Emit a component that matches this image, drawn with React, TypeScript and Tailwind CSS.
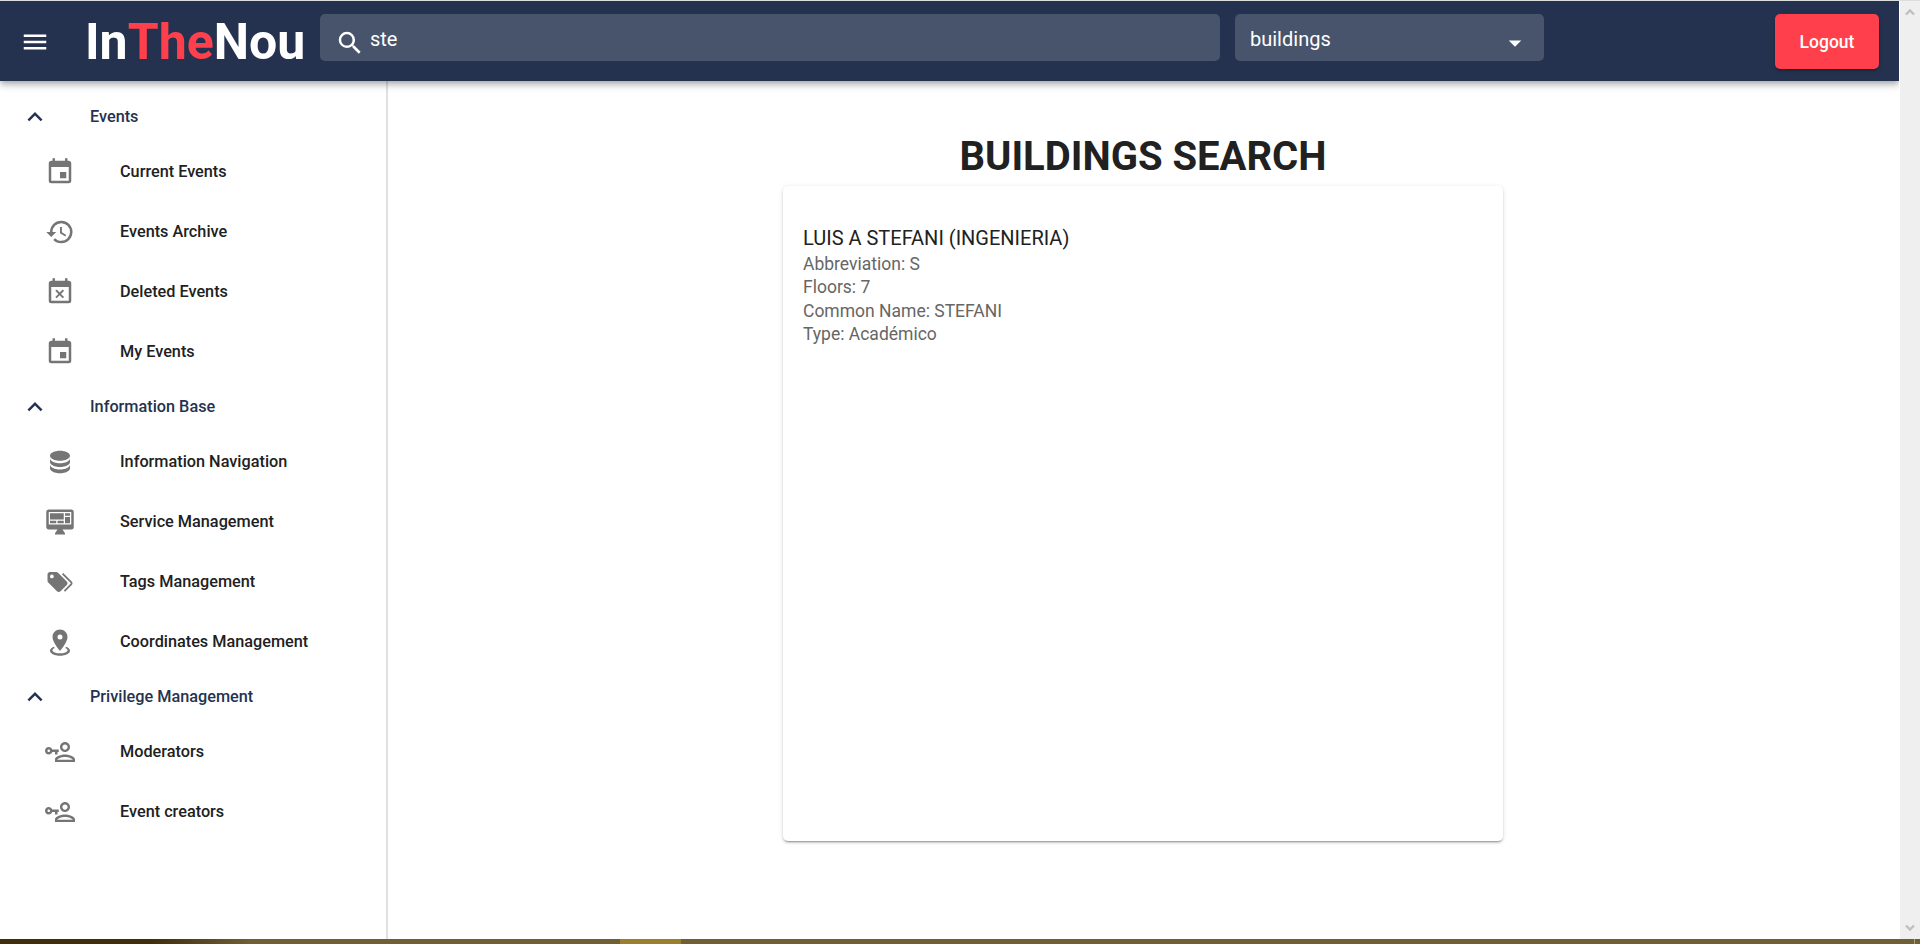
const paths = {
  menu: 'M3,6H21V8H3V6M3,11H21V13H3V11M3,16H21V18H3V16Z',
  calendar:
    'M19,19H5V8H19M16,1V3H8V1H6V3H5C3.89,3 3,3.89 3,5V19A2,2 0 0,0 5,21H19A2,2 0 0,0 21,19V5C21,3.89 20.1,3 19,3H18V1M17,12H12V17H17V12Z',
  history:
    'M13.5,8H12V13L16.28,15.54L17,14.33L13.5,12.25V8M13,3A9,9 0 0,0 4,12H1L4.96,16.03L9,12H6A7,7 0 0,1 13,5A7,7 0 0,1 20,12A7,7 0 0,1 13,19C11.07,19 9.32,18.21 8.06,16.94L6.64,18.36C8.27,20 10.5,21 13,21A9,9 0 0,0 22,12A9,9 0 0,0 13,3',
  calendarRemove:
    'M19,19H5V8H19M19,3H18V1H16V3H8V1H6V3H5C3.89,3 3,3.9 3,5V19A2,2 0 0,0 5,21H19A2,2 0 0,0 21,19V5A2,2 0 0,0 19,3M9.31,17L11.75,14.56L14.19,17L15.25,15.94L12.81,13.5L15.25,11.06L14.19,10L11.75,12.44L9.31,10L8.25,11.06L10.69,13.5L8.25,15.94L9.31,17Z',
  database:
    'M12,3C7.58,3 4,4.79 4,7C4,9.21 7.58,11 12,11C16.42,11 20,9.21 20,7C20,4.79 16.42,3 12,3M4,9V12C4,14.21 7.58,16 12,16C16.42,16 20,14.21 20,12V9C20,11.21 16.42,13 12,13C7.58,13 4,11.21 4,9M4,14V17C4,19.21 7.58,21 12,21C16.42,21 20,19.21 20,17V14C20,16.21 16.42,18 12,18C7.58,18 4,16.21 4,14Z',
  dashboard:
    'M21,14V4H3V14H21M21,2A2,2 0 0,1 23,4V16A2,2 0 0,1 21,18H14L16,21V22H8V21L10,18H3C1.89,18 1,17.1 1,16V4C1,2.89 1.89,2 3,2H21M4,5H15V10H4V5M16,5H20V7H16V5M20,8V13H16V8H20M4,11H9V13H4V11M10,11H15V13H10V11Z',
  tags:
    'M5.5,9A1.5,1.5 0 0,0 7,7.5A1.5,1.5 0 0,0 5.5,6A1.5,1.5 0 0,0 4,7.5A1.5,1.5 0 0,0 5.5,9M17.41,11.58C17.77,11.94 18,12.44 18,13C18,13.55 17.78,14.05 17.41,14.41L12.41,19.41C12.05,19.77 11.55,20 11,20C10.45,20 9.95,19.78 9.58,19.41L2.59,12.42C2.22,12.05 2,11.55 2,11V6C2,4.89 2.89,4 4,4H9C9.55,4 10.05,4.22 10.41,4.58L17.41,11.58M13.54,5.71L14.54,4.71L21.41,11.58C21.78,11.94 22,12.45 22,13C22,13.55 21.78,14.05 21.42,14.41L16.04,19.79L15.04,18.79L20.75,13L13.54,5.71Z',
  marker:
    'M12,2C15.31,2 18,4.66 18,7.95C18,12.41 12,19 12,19C12,19 6,12.41 6,7.95C6,4.66 8.69,2 12,2M12,6A2,2 0 0,0 10,8A2,2 0 0,0 12,10A2,2 0 0,0 14,8A2,2 0 0,0 12,6M20,19C20,21.21 16.42,23 12,23C7.58,23 4,21.21 4,19C4,17.71 5.22,16.56 7.11,15.83L7.75,16.74C6.67,17.19 6,17.81 6,18.5C6,19.88 8.69,21 12,21C15.31,21 18,19.88 18,18.5C18,17.81 17.33,17.19 16.25,16.74L16.89,15.83C18.78,16.56 20,17.71 20,19Z',
  accountKey:
    'M11 10V12H10V14H8V12H5.83C5.42 13.17 4.31 14 3 14C1.34 14 0 12.66 0 11C0 9.34 1.34 8 3 8C4.31 8 5.42 8.83 5.83 10H11M3 10C2.45 10 2 10.45 2 11C2 11.55 2.45 12 3 12C3.55 12 4 11.55 4 11C4 10.45 3.55 10 3 10M16 14C18.67 14 24 15.34 24 18V20H8V18C8 15.34 13.33 14 16 14M16 12C13.8 12 12 10.21 12 8C12 5.79 13.8 4 16 4C18.2 4 20 5.79 20 8C20 10.21 18.2 12 16 12M16 15.9C13.03 15.9 9.9 17.36 9.9 18V18.1H22.1V18C22.1 17.36 18.97 15.9 16 15.9M16 5.9C14.84 5.9 13.9 6.84 13.9 8C13.9 9.16 14.84 10.1 16 10.1C17.16 10.1 18.1 9.16 18.1 8C18.1 6.84 17.16 5.9 16 5.9Z',
  chevronUp: 'M7.41,15.41L12,10.83L16.59,15.41L18,14L12,8L6,14L7.41,15.41Z',
  magnify:
    'M9.5,3A6.5,6.5 0 0,1 16,9.5C16,11.11 15.41,12.59 14.44,13.73L14.71,14H15.5L20.5,19L19,20.5L14,15.5V14.71L13.73,14.44C12.59,15.41 11.11,16 9.5,16A6.5,6.5 0 0,1 3,9.5A6.5,6.5 0 0,1 9.5,3M9.5,5C7,5 5,7 5,9.5C5,12 7,14 9.5,14C12,14 14,12 14,9.5C14,7 12,5 9.5,5Z',
  menuDown: 'M7,10L12,15L17,10H7Z',
};

type IconName = keyof typeof paths;

function Icon({ name, className = '' }: { name: IconName; className?: string }) {
  return (
    <svg viewBox="0 0 24 24" fill="currentColor" className={`h-[30px] w-[30px] shrink-0 ${className}`}>
      <path d={paths[name]} />
    </svg>
  );
}

const groups: { title: string; items: { icon: IconName; label: string }[] }[] = [
  {
    title: 'Events',
    items: [
      { icon: 'calendar', label: 'Current Events' },
      { icon: 'history', label: 'Events Archive' },
      { icon: 'calendarRemove', label: 'Deleted Events' },
      { icon: 'calendar', label: 'My Events' },
    ],
  },
  {
    title: 'Information Base',
    items: [
      { icon: 'database', label: 'Information Navigation' },
      { icon: 'dashboard', label: 'Service Management' },
      { icon: 'tags', label: 'Tags Management' },
      { icon: 'marker', label: 'Coordinates Management' },
    ],
  },
  {
    title: 'Privilege Management',
    items: [
      { icon: 'accountKey', label: 'Moderators' },
      { icon: 'accountKey', label: 'Event creators' },
    ],
  },
];

const details = ['Abbreviation: S', 'Floors: 7', 'Common Name: STEFANI', 'Type: Académico'];

function Header() {
  return (
    <header className="relative z-10 flex h-20 shrink-0 items-start bg-[#25324f] text-white shadow-[0_2px_5px_-1px_rgba(0,0,0,0.2),0_5px_6px_rgba(0,0,0,0.14),0_1px_12px_rgba(0,0,0,0.12)]">
      <Icon name="menu" className="mt-[26px] ml-5" />
      <h1 className="ml-[35px] w-[235px] shrink-0 pt-[11px] text-[50px] leading-[60px] font-bold">
        In<span className="text-[#ff3f4c]">The</span>Nou
      </h1>
      <div className="mt-[13px] flex h-[47px] w-[900px] shrink-0 rounded-[5px] bg-[#48546b] pl-[15px]">
        <Icon name="magnify" className="mt-[14px]" />
        <span className="ml-[5px] text-[20px] leading-[50px]">ste</span>
      </div>
      <div className="mt-[13px] ml-[15px] flex h-[47px] w-[309px] shrink-0 justify-between rounded-[5px] bg-[#48546b] pr-[14px] pl-[15px]">
        <span className="text-[20px] leading-[50px]">buildings</span>
        <Icon name="menuDown" className="mt-[14px]" />
      </div>
      <button className="mt-[13px] mr-5 ml-auto h-[55px] w-[104px] rounded-[5px] bg-[#ff3f4c] pt-[2px] text-[17.5px] font-medium shadow-[0_3px_1px_-2px_rgba(0,0,0,0.2),0_2px_2px_rgba(0,0,0,0.14),0_1px_5px_rgba(0,0,0,0.12)]">
        Logout
      </button>
    </header>
  );
}

function Sidebar() {
  return (
    <nav className="w-[388px] shrink-0 border-r-2 border-[#e0e0e0] pt-[11px] text-[16.25px] font-medium">
      {groups.map((g) => (
        <div key={g.title}>
          <div className="flex h-[50px] items-center pl-5 text-[#25324f]">
            <Icon name="chevronUp" />
            <span className="ml-10">{g.title}</span>
          </div>
          {g.items.map((item) => (
            <div key={item.label} className="flex h-[60px] items-center pl-[45px] text-[#212121]">
              <Icon name={item.icon} className="text-[#757575]" />
              <span className="ml-[45px]">{item.label}</span>
            </div>
          ))}
        </div>
      ))}
    </nav>
  );
}

function Arrow({ d }: { d: string }) {
  return (
    <svg viewBox="0 0 10 8" className="h-2 w-[10px]" fill="none" stroke="#bfbfbf" strokeWidth="2.4">
      <path d={d} />
    </svg>
  );
}

export default function App() {
  return (
    <div className="flex h-[944px] w-[1920px] flex-col overflow-hidden bg-white font-[Roboto,sans-serif] text-[#212121]">
      <div className="h-px shrink-0 bg-[#dcdddd]" />
      <div className="flex min-h-0 flex-1">
        <div className="mr-px flex w-[1899px] flex-col overflow-hidden">
          <Header />
          <div className="flex min-h-0 flex-1">
            <Sidebar />
            <main className="flex flex-1 flex-col items-center pr-px">
              <h2 className="mt-[51px] text-[40px] leading-[50px] font-bold">BUILDINGS SEARCH</h2>
              <section className="mt-1 h-[655px] w-[720px] rounded-[5px] bg-white pt-10 pl-5 shadow-[0_3px_1px_-2px_rgba(0,0,0,0.2),0_2px_2px_rgba(0,0,0,0.14),0_1px_5px_rgba(0,0,0,0.12)]">
                <h3 className="mb-0.5 text-[20px] leading-[25px]">LUIS A STEFANI (INGENIERIA)</h3>
                {details.map((line) => (
                  <p key={line} className="text-[17.5px] leading-[23.44px] text-[#666666]">
                    {line}
                  </p>
                ))}
              </section>
            </main>
          </div>
        </div>
        <div className="flex w-5 flex-col items-center justify-between bg-[#efefef] pt-[7px] pb-[7px]">
          <Arrow d="M1 6.5L5 2.5L9 6.5" />
          <Arrow d="M1 1.5L5 5.5L9 1.5" />
        </div>
      </div>
      <div className="flex h-[5px] shrink-0 bg-[#6f5f35]">
        <div className="w-[250px] bg-linear-to-r from-[#3f2d0c] from-60% to-[#6f5f35]" />
        <div className="ml-[370px] w-[61px] bg-[#9c7f2d]" />
        <div className="mr-[5px] ml-auto w-px bg-[#a89e83]" />
      </div>
    </div>
  );
}
